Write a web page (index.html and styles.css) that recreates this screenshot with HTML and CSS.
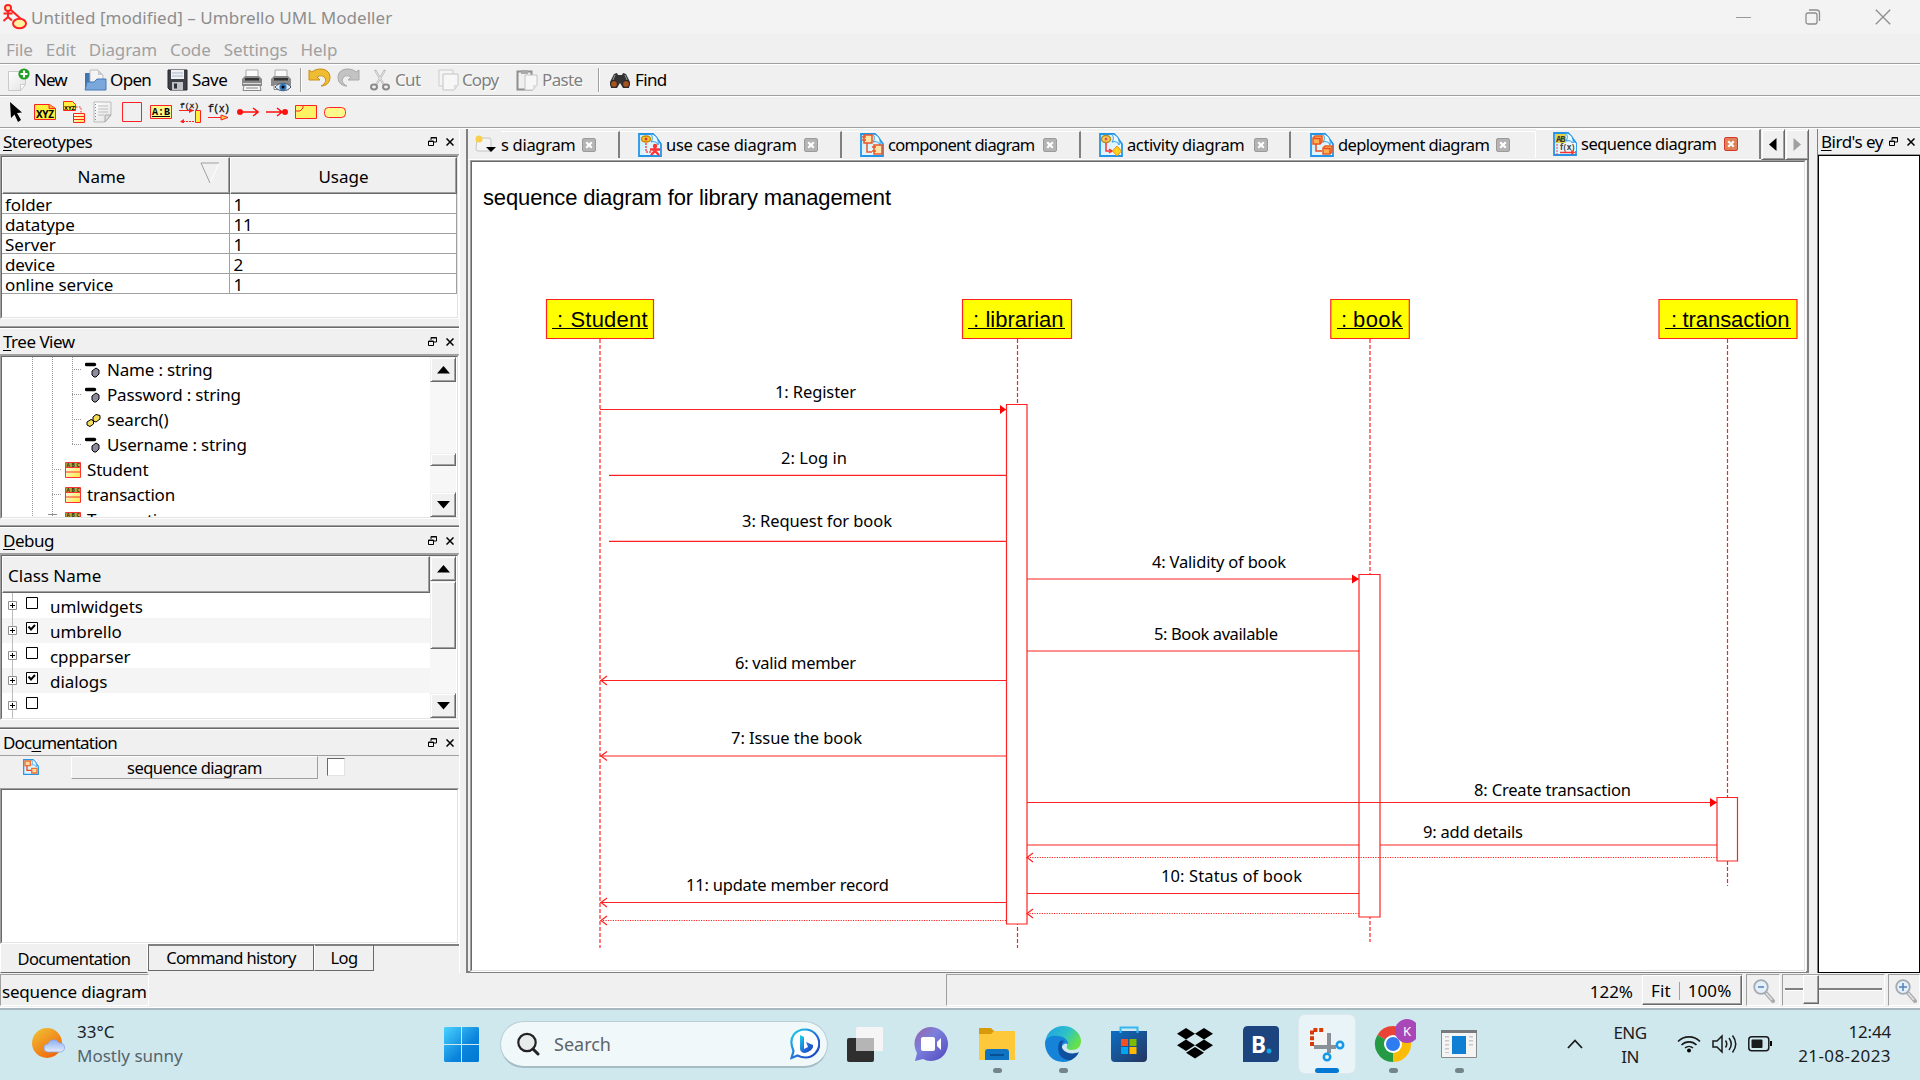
FILE: index.html
```html
<!DOCTYPE html>
<html lang="en">
<head>
<meta charset="utf-8">
<title>Untitled [modified] – Umbrello UML Modeller</title>
<link rel="stylesheet" href="styles.css">
</head>
<body>
<svg class="defs" width="0" height="0">
  <defs>
    <linearGradient id="gPaper" x1="0" y1="0" x2="1" y2="1"><stop offset="0" stop-color="#fff"/><stop offset="1" stop-color="#e2e2e2"/></linearGradient>
    <linearGradient id="gClass" x1="0" y1="0" x2="1" y2="1"><stop offset="0" stop-color="#fff"/><stop offset="1" stop-color="#fbe93a"/></linearGradient>
    <linearGradient id="gTab" x1="0" y1="0" x2="1" y2="1"><stop offset="0" stop-color="#c5ecfc"/><stop offset="1" stop-color="#f4fcff"/></linearGradient>
    <symbol id="restore" viewBox="0 0 9 9"><path d="M3 3V.5h5.5V5H6M3 1h5.5M.5 4h5v4.500h-5zM.5 4.500h5" fill="none" stroke="#000"/></symbol>
    <symbol id="close" viewBox="0 0 8 8"><path d="M.5.5l7 7M7.500.5l-7 7" stroke="#000" stroke-width="1.500"/></symbol>
    <symbol id="attr" viewBox="0 0 16 16"><path d="M1.500 2.500h8" stroke="#000" stroke-width="3.400" stroke-linecap="round"/><path d="M7 9l4-3 3 2v4l-3 3h-2l-2-2z" fill="#8d8a9e" stroke="#000"/></symbol>
    <symbol id="oper" viewBox="0 0 16 16"><path d="M2 10l4-2.500 2.500 1V12L5 14.500 2 13zM8 5l3-2.500 4 1V7l-4 3-3-1z" fill="#f4de55" stroke="#000"/></symbol>
    <symbol id="cls" viewBox="0 0 16 16"><path d="M.5.5h15v15H.5z" fill="url(#gClass)" stroke="#f33"/><path d="M1 1h14v4H1z" fill="#b4a83c"/><path d="M0 5.500h16M0 10h16" stroke="#f33"/><text x="1.500" y="5" font-size="5" font-weight="bold" textLength="13" fill="#332">ABC</text></symbol>
    <symbol id="plus" viewBox="0 0 9 9"><path d="M.5.5h8v8h-8z" fill="#fff" stroke="#909090"/><path d="M2 4.500h5M4.500 2v5" stroke="#000"/></symbol>
    <symbol id="box" viewBox="0 0 12 12"><path d="M.5.5h11v11H.5z" fill="#fff" stroke="#000"/></symbol>
    <symbol id="checked" viewBox="0 0 12 12"><path d="M.5.5h11v11H.5z" fill="#fff" stroke="#000"/><path d="M2.500 4.500l2.500 3 4-4.500" fill="none" stroke="#000" stroke-width="2"/></symbol>
    <symbol id="up" viewBox="0 0 13 8"><path d="M6.500 0L13 7.500H0z"/></symbol>
    <symbol id="down" viewBox="0 0 13 8"><path d="M6.500 7.500L0 0h13z"/></symbol>
    <symbol id="page" viewBox="0 0 24 24"><path d="M1 1h14l3 3 5 7v12H1z" fill="url(#gTab)" stroke="#2495e6" stroke-width="1.800"/><path d="M12 1c6 0 9 5 8 11-1-3-4-4-7-3 2-3 2-6-1-8z" fill="#e8f9ff" stroke="#2b99e8"/></symbol>
    <symbol id="tabclose" viewBox="0 0 14 14"><rect x=".5" y=".5" width="13" height="13" rx="1.500" fill="#b4b4b4" stroke="#9b9b9b"/><path d="M4.200 4.200l5.600 5.600M9.800 4.200L4.200 9.800" stroke="#fff" stroke-width="2.200"/></symbol>
    <symbol id="tabclose-red" viewBox="0 0 14 14"><rect x=".5" y=".5" width="13" height="13" rx="1.500" fill="#e08058" stroke="#d63a2a"/><path d="M4.200 4.200l5.600 5.600M9.800 4.200L4.200 9.800" stroke="#fff" stroke-width="2.200"/></symbol>
    <symbol id="lens" viewBox="0 0 22 24"><path d="M13 14l7 8" stroke="#aaa" stroke-width="4" stroke-linecap="round"/><path d="M13 14l6 7" stroke="#e4e4e4" stroke-width="1.500"/><circle cx="8" cy="8" r="6.800" fill="#e3effa" stroke="#a4aab2" stroke-width="1.800"/></symbol>
  </defs>
</svg>

<header class="titlebar">
  <svg class="app-icon" viewBox="0 0 26 26"><g fill="none" stroke="#f22" stroke-width="2"><circle cx="6" cy="4" r="3" fill="#ffefb0"/><path d="M6 7v7M1.500 9.500h9M6 13l-4.500 4M6 13l4 3.500M9 6l10 9"/><ellipse cx="17.500" cy="19.500" rx="6.500" ry="4.800" fill="#fff2a0"/></g></svg>
  <span class="title-text">Untitled [modified] – Umbrello UML Modeller</span>
  <div class="win-buttons">
    <svg width="15" height="16" viewBox="0 0 15 16"><path d="M0 8.500h15" stroke="#999"/></svg>
    <svg width="16" height="16" viewBox="0 0 16 16"><g fill="none" stroke="#8d8d8d" stroke-width="1.300"><rect x="1" y="4" width="11" height="11" rx="2"/><path d="M4 1h7.500a3 3 0 0 1 3 3v8"/></g></svg>
    <svg width="16" height="16" viewBox="0 0 16 16"><path d="M.8.8l14.400 14.400M15.200.8L.8 15.200" stroke="#8d8d8d" stroke-width="1.300"/></svg>
  </div>
</header>
<nav class="menubar"><span>File</span><span>Edit</span><span>Diagram</span><span>Code</span><span>Settings</span><span>Help</span></nav>

<div class="toolbar main-tools">
  <div class="tool t-new"><svg width="24" height="24" viewBox="0 0 24 24"><path d="M1.500 3.500h17v13l-5 6h-12z" fill="url(#gPaper)" stroke="#c9c9c9"/><path d="M18.500 16.500h-5v6z" fill="#fff" stroke="#ccc"/><circle cx="17" cy="6" r="5.600" fill="#1f9d24"/><path d="M17 2.500v7M13.500 6h7" stroke="#fff" stroke-width="2.200"/></svg><span>New</span></div>
  <div class="tool t-open"><svg width="23" height="24" viewBox="0 0 23 24"><path d="M1 5h8l2 3v12H1z" fill="#3f74b5"/><path d="M6 2h8l5 5v9H6z" fill="#f4f4f4" stroke="#bbb"/><path d="M14 2v5h5" fill="#ccc"/><path d="M1 22L3 14h7l3-3h9v11z" fill="#7aa7dc" stroke="#4878b4"/></svg><span>Open</span></div>
  <div class="tool t-save"><svg width="21" height="22" viewBox="0 0 21 22"><path d="M1 1h19v20H3l-2-2z" fill="#3f4046" stroke="#26272b"/><path d="M4 1h13v9H4z" fill="#eef1f5"/><path d="M5 4h11M5 7h11" stroke="#a9b6c6"/><path d="M5 13h11v8H5z" fill="#bfc3c8"/><path d="M7 14.500h3v5H7z" fill="#33343a"/></svg><span>Save</span></div>
  <div class="tool t-print"><svg width="22" height="23" viewBox="0 0 22 23"><path d="M5 1h12v8H5z" fill="#fafafa" stroke="#aaa"/><path d="M1 10l3-3h14l3 3v7H1z" fill="#8a8a8a"/><path d="M4 9h14v2.500H4z" fill="#333"/><path d="M2 14.500h18" stroke="#ddd"/><path d="M3 16.500h16l1 5H2z" fill="#f6f6f6" stroke="#888"/><path d="M5 19h12" stroke="#888"/></svg></div>
  <div class="tool t-preview"><svg width="22" height="23" viewBox="0 0 22 23"><path d="M5 1h12v8H5z" fill="#fafafa" stroke="#aaa"/><path d="M1 10l3-3h14l3 3v7H1z" fill="#8a8a8a"/><path d="M4 9h14v2.500H4z" fill="#333"/><path d="M4 15.500h14v5H4z" fill="#f6f6f6" stroke="#888"/><path d="M5 18c4-5 12-5 16 0-4 5-12 5-16 0z" fill="#dceaf8" stroke="#456"/><circle cx="13" cy="18" r="3.600" fill="#3377bb"/><circle cx="13" cy="18" r="1.500"/></svg></div>
  <i class="tool-sep"></i>
  <div class="tool t-undo"><svg width="23" height="20" viewBox="0 0 23 20"><path d="M1 2l3 2C9-1 22 0 22 9c0 6-4 9-9 9 5-2 6-7 3-9-2-2-5-1-7 0l3 3H1z" fill="#efbd32" stroke="#c88d17"/></svg></div>
  <div class="tool t-redo"><svg width="23" height="20" viewBox="0 0 23 20"><path d="M22 2l-3 2C14-1 1 0 1 9c0 6 4 9 9 9-5-2-6-7-3-9 2-2 5-1 7 0l-3 3h11z" fill="#c3c3c3" stroke="#a8a8a8"/></svg></div>
  <div class="tool t-cut off"><svg width="20" height="22" viewBox="0 0 20 22"><path d="M5 1l9 15M15 1L6 16" stroke="#b7b7b7" stroke-width="2.200"/><path d="M5.500 2l8 13M14.500 2l-8 13" stroke="#eee" stroke-width=".8"/><g fill="none" stroke="#8b8b8b" stroke-width="2"><ellipse cx="4" cy="18" rx="3" ry="2.400"/><ellipse cx="16" cy="18" rx="3" ry="2.400"/></g></svg><span>Cut</span></div>
  <div class="tool t-copy off"><svg width="21" height="22" viewBox="0 0 21 22"><path d="M1 1h14v16H1z" fill="#f4f4f4" stroke="#ccc"/><path d="M5 5h15v11l-4 5H5z" fill="#f7f7f7" stroke="#c4c4c4"/><path d="M20 16h-4v5z" fill="#ddd"/></svg><span>Copy</span></div>
  <div class="tool t-paste off"><svg width="22" height="22" viewBox="0 0 22 22"><path d="M1.500 2.500h14v18h-14z" fill="#f0f0f0" stroke="#8e8e8e" stroke-width="2"/><path d="M5 1h7v4H5z" fill="#aaa"/><path d="M9 6h12v10l-4 5H9z" fill="#f7f7f7" stroke="#c4c4c4"/><path d="M21 16h-4v5z" fill="#ddd"/></svg><span>Paste</span></div>
  <i class="tool-sep sep2"></i>
  <div class="tool t-find"><svg width="22" height="17" viewBox="0 0 22 17"><path d="M1 10L5 2l3-1 1 2h4l1-2 3 1 4 8-1 6h-6l-3-5-3 5H2z" fill="#333"/><circle cx="5" cy="12" r="3.500" fill="#a5531f" stroke="#222"/><circle cx="17" cy="12" r="3.500" fill="#a5531f" stroke="#222"/><path d="M6 3l-2 5M16 3l2 5" stroke="#999"/></svg><span>Find</span></div>
</div>

<div class="toolbar diagram-tools">
  <svg viewBox="0 0 22 22"><path d="M5 1l12 10.500-5 .5 4 7-3 2-3.500-7.500L6 17z"/></svg>
  <svg viewBox="0 0 22 22"><path d="M.5 3.500h15l6 4v11H.5z" fill="#fdf03c" stroke="#f22"/><path d="M15 3.500v4h6" fill="#f9b233" stroke="#f22"/><text x="2" y="17" font-size="10" font-weight="bold" textLength="18">XYZ</text></svg>
  <svg viewBox="0 0 22 22"><path d="M.5.5h9l3 3v6H.5z" fill="#fdf03c" stroke="#f22"/><text x="1" y="8.500" font-size="6" font-weight="bold" textLength="11">XYZ</text><path d="M13 6h5v6" fill="none" stroke="#f22" stroke-dasharray="1.500 1.500"/><path d="M10.500 12.500h11v9h-11z" fill="url(#gClass)" stroke="#f22"/><path d="M10 15.500h12M10 18.500h12" stroke="#f22"/></svg>
  <svg viewBox="0 0 22 22"><path d="M2 1h17v13l-6 7H2z" fill="url(#gPaper)" stroke="#bbb"/><path d="M6 5h10M6 8h10M6 11h10M6 14h6" stroke="#bbb"/><path d="M3.500 3v17" stroke="#889" stroke-dasharray="1 2"/><path d="M19 14h-6v7z" fill="#ddd" stroke="#aaa"/></svg>
  <svg viewBox="0 0 22 22"><path d="M1.500 1.500h19v19h-19z" fill="none" stroke="#f22"/></svg>
  <svg viewBox="0 0 22 22"><path d="M.5 4.500h21v13H.5z" fill="#fdf88c" stroke="#f22"/><text x="2" y="14" class="mono" font-size="10" font-weight="bold" textLength="18">A:B</text><path d="M2 15.500h18" stroke="#000"/></svg>
  <svg viewBox="0 0 22 22"><text x="1" y="7" class="mono" font-size="8" textLength="19" stroke="#222" stroke-width=".3">f(x)</text><path d="M0 9.500h15" stroke="#f22"/><path d="M4 20.500h12" stroke="#f22" stroke-dasharray="2 1"/><path d="M10 7l5 2.500-5 2.500zM5 18l-4 2.500 4 2.500z" fill="#f22"/><path d="M16.500 9.500h5v12h-5z" fill="#fdf03c" stroke="#f22"/></svg>
  <svg viewBox="0 0 22 22"><text x="0" y="11" class="mono" font-size="10" textLength="22" stroke="#222" stroke-width=".3">f(x)</text><path d="M0 16.500h14" stroke="#f22"/><path d="M13 14l7 2.500-7 2.500z" fill="#fc4" stroke="#f22"/></svg>
  <svg viewBox="0 0 22 22"><circle cx="3" cy="11" r="3" fill="#f11"/><path d="M3 11h18M16 7l5 4-5 4" fill="none" stroke="#f11" stroke-width="1.500"/></svg>
  <svg viewBox="0 0 22 22"><circle cx="19" cy="11" r="3" fill="#f11"/><path d="M0 11h18M11 7l5 4-5 4" fill="none" stroke="#f11" stroke-width="1.500"/></svg>
  <svg viewBox="0 0 22 22"><path d="M.5 4.500h21v13H.5z" fill="#fdf264" stroke="#f22"/><path d="M1 10h4l3-3V5" fill="none" stroke="#f22"/></svg>
  <svg viewBox="0 0 22 22"><rect x=".5" y="6.500" width="21" height="10" rx="4" fill="#fdf88c" stroke="#f22"/></svg>
</div>

<main class="workspace">
  <aside class="dock">
    <section class="panel stereo">
      <h2><span><u>S</u>tereotypes</span><svg class="d-rest"><use href="#restore"/></svg><svg class="d-close"><use href="#close"/></svg></h2>
      <div class="frame"><div class="inner">
        <div class="grid-head"><div>Name<svg class="sort" width="20" height="22" viewBox="0 0 20 22"><path d="M19 1L10 21" stroke="#fff"/><path d="M19 1H1l9 20" fill="none" stroke="#a0a0a0"/></svg></div><div>Usage</div></div>
        <div class="grid-row"><span>folder</span><span>1</span></div>
        <div class="grid-row"><span>datatype</span><span>11</span></div>
        <div class="grid-row"><span>Server</span><span>1</span></div>
        <div class="grid-row"><span>device</span><span>2</span></div>
        <div class="grid-row"><span>online service</span><span>1</span></div>
      </div></div>
    </section>
    <section class="panel tree">
      <h2><span><u>T</u>ree View</span><svg class="d-rest"><use href="#restore"/></svg><svg class="d-close"><use href="#close"/></svg></h2>
      <div class="frame"><div class="inner split">
        <div class="tree-list">
          <svg class="branches" width="80" height="159" viewBox="0 0 80 159"><path d="M30.500 0v159M50.500 0v159M70.500 0v88M70 12.500h10M70 37.500h10M70 62.500h10M70 87.500h10M50 112.500h10M50 137.500h10" fill="none" stroke="#999" stroke-dasharray="1 1"/><path d="M46 157.500h9" stroke="#909090"/></svg>
          <div class="leaf"><svg><use href="#attr"/></svg>Name : string</div>
          <div class="leaf"><svg><use href="#attr"/></svg>Password : string</div>
          <div class="leaf"><svg><use href="#oper"/></svg>search()</div>
          <div class="leaf"><svg><use href="#attr"/></svg>Username : string</div>
          <div class="leaf node"><svg><use href="#cls"/></svg>Student</div>
          <div class="leaf node"><svg><use href="#cls"/></svg>transaction</div>
          <div class="leaf node"><svg><use href="#cls"/></svg>Transaction</div>
        </div>
        <div class="scroll"><b class="sb"><svg><use href="#up"/></svg></b><i class="grow1"></i><b class="thumb small"></b><i class="grow2"></i><b class="sb"><svg><use href="#down"/></svg></b></div>
      </div></div>
    </section>
    <section class="panel debug">
      <h2><span><u>D</u>ebug</span><svg class="d-rest"><use href="#restore"/></svg><svg class="d-close"><use href="#close"/></svg></h2>
      <div class="frame"><div class="inner split">
        <div class="debug-list">
          <div class="list-head">Class Name</div>
          <div class="check-row"><svg class="pl"><use href="#plus"/></svg><svg class="ck"><use href="#box"/></svg>umlwidgets</div>
          <div class="check-row alt"><svg class="pl"><use href="#plus"/></svg><svg class="ck"><use href="#checked"/></svg>umbrello</div>
          <div class="check-row"><svg class="pl"><use href="#plus"/></svg><svg class="ck"><use href="#box"/></svg>cppparser</div>
          <div class="check-row alt"><svg class="pl"><use href="#plus"/></svg><svg class="ck"><use href="#checked"/></svg>dialogs</div>
          <div class="check-row"><svg class="pl"><use href="#plus"/></svg><svg class="ck"><use href="#box"/></svg></div>
        </div>
        <div class="scroll"><b class="sb"><svg><use href="#up"/></svg></b><b class="thumb large"></b><i class="grow"></i><b class="sb"><svg><use href="#down"/></svg></b></div>
      </div></div>
    </section>
    <section class="panel docs">
      <h2><span>Doc<u>u</u>mentation</span><svg class="d-rest"><use href="#restore"/></svg><svg class="d-close"><use href="#close"/></svg></h2>
      <div class="doc-row">
        <svg width="16" height="16" viewBox="0 0 24 24"><use href="#page"/><path d="M3 3h8v7H3zM13 14h8v7h-8z" fill="#ffd9a0" stroke="#f07030" stroke-width="2"/><path d="M6 10v7h6" fill="none" stroke="#f04020" stroke-width="2"/></svg>
        <div class="doc-name">sequence diagram</div><div class="doc-check"></div>
      </div>
      <div class="frame"><div class="inner"></div></div>
      <div class="dock-tabs"><span class="on">Documentation</span><span class="cmd">Command history</span><span class="log">Log</span><em></em></div>
    </section>
  </aside>

  <section class="mdi">
    <div class="tabs">
      <div class="newtab"><svg width="21" height="20" viewBox="0 0 21 20"><path d="M2 3h12q2 0 2 2v11H3q-2 0-2-2z" fill="#f4f4f4" stroke="#c4c4c4"/><circle cx="4" cy="4" r="3.500" fill="#f7cf4a"/><path d="M11 12h10l-5 5z"/></svg></div>
      <div class="tab first"><span>s diagram</span><svg class="x"><use href="#tabclose"/></svg></div>
      <div class="tab usecase"><svg class="ic" viewBox="0 0 24 24"><use href="#page"/><ellipse cx="8" cy="6" rx="4.500" ry="3" fill="#fc3" stroke="#c80" stroke-width="1.500"/><circle cx="8" cy="6" r="1.500" fill="#d33"/><path d="M8 10v9h5" fill="none" stroke="#f44" stroke-dasharray="2 1" stroke-width="1.500"/><circle cx="17" cy="13" r="2.200" fill="#f33"/><path d="M12 16.500h10M17 14v4l-4 4M17 18l4 4" fill="none" stroke="#f33" stroke-width="2.400"/></svg><span>use case diagram</span><svg class="x"><use href="#tabclose"/></svg></div>
      <div class="tab component"><svg class="ic" viewBox="0 0 24 24"><use href="#page"/><path d="M4 2h8v8H4zM14 12h8v9h-8zM2 4h4M2 7h4M12 14h4M12 18h4" fill="#ffe3a8" stroke="#e8552a" stroke-width="1.500"/><path d="M7 10v9h5" fill="none" stroke="#e8552a" stroke-width="1.500"/></svg><span>component diagram</span><svg class="x"><use href="#tabclose"/></svg></div>
      <div class="tab activity"><svg class="ic" viewBox="0 0 24 24"><use href="#page"/><ellipse cx="7" cy="6" rx="4.500" ry="3.500" fill="#ffd25a" stroke="#b88a20" stroke-width="1.500"/><circle cx="7" cy="6" r="1.500" fill="#d55"/><path d="M7 10v8h5M10 16l3 2-3 2" fill="none" stroke="#f33" stroke-width="1.500"/><path d="M18 13l4.500 5-4.500 5-4.500-5z" fill="#ffd21c" stroke="#ee8a10"/></svg><span>activity diagram</span><svg class="x"><use href="#tabclose"/></svg></div>
      <div class="tab deployment"><svg class="ic" viewBox="0 0 24 24"><use href="#page"/><path d="M3 5l2-2h7v6l-2 2H3zM13 15l2-2h7v6l-2 2h-7z" fill="#ffb050" stroke="#ea5a20" stroke-width="1.500"/><path d="M4 5.500h6v5M14 15.500h6v5M6 11v7h6" fill="none" stroke="#ea4a20" stroke-width="1.500"/></svg><span>deployment diagram</span><svg class="x"><use href="#tabclose"/></svg></div>
      <div class="tab sequence"><svg class="ic" viewBox="0 0 24 24"><use href="#page"/><path d="M2 2h11v9H2z" fill="#e2cf48"/><text x="3" y="9.500" font-size="8" font-weight="bold" textLength="9" fill="#333">AB</text><path d="M4 12v11" stroke="#f44" stroke-dasharray="2 1"/><path d="M6 11h17v8H6z" fill="#eef6fa"/><text x="7" y="17.500" font-size="8" font-weight="bold" textLength="14" fill="#444">f(x)</text><path d="M7 20.500h13M18 18.500l3 2-3 2" fill="none" stroke="#f33" stroke-width="1.500"/></svg><span>sequence diagram</span><svg class="x"><use href="#tabclose-red"/></svg></div>
      <div class="tab-nav"><b><svg width="8" height="13" viewBox="0 0 8 13"><path d="M7.500 0v13L0 6.500z"/></svg></b><b><svg width="8" height="13" viewBox="0 0 8 13"><path d="M.5 0v13L8 6.500z" fill="#a0a0a0"/></svg></b></div>
    </div>
    <div class="canvas-frame"><div class="canvas-inner">
      <svg class="diagram" viewBox="472 162 1333 808">
        <text class="obj" x="483" y="204.500" textLength="408">sequence diagram for library management</text>
        <g class="life"><path d="M600 339V948M1017.500 339V948M1370 339V942M1727.500 339V886"/></g>
        <g class="head"><path d="M546.500 299.500h107v39h-107zM962.500 299.500h109v39h-109zM1330.800 299.500h78.500v39h-78.500zM1659 299.500h138v39h-138z"/></g>
        <g class="obj">
          <text x="557" y="327">:</text><text x="570.500" y="327" textLength="77">Student</text>
          <text x="973" y="327">:</text><text x="985.500" y="327" textLength="78">librarian</text>
          <text x="1341" y="327">:</text><text x="1353" y="327" textLength="49">book</text>
          <text x="1671" y="327">:</text><text x="1682.500" y="327" textLength="107">transaction</text>
        </g>
        <path d="M552 328.500h96M968 328.500h97M1337 328.500h66M1665 328.500h126" stroke="#000"/>
        <g class="msg"><path d="M1027 845h690"/></g>
        <g class="bar"><path d="M1006.500 404.500h20.500v519.500h-20.500zM1359 574.500h21v342.500h-21zM1717 797.500h20.500v63.500h-20.500z"/></g>
        <g class="msg"><path d="M600 409.500h406M609 475.300h397M609 541.300h397M1027 579h332M1027 651h332M600 680.500h406M600 756h406M1027 802.500h690M1027 893.500h332M600 902.500h406"/></g>
        <g class="ret"><path d="M1717 857.500H1027M1359 913.500H1027M1006 920.500H600"/></g>
        <g class="solid-tip"><path d="M1000 405l6 4.500-6 4.500zM1352 574.500l7 4.500-7 4.500zM1710 798l7 4.500-7 4.500z"/></g>
        <g class="open-tip"><path d="M607 676l-6 4.500 6 4.500M607 751.500l-6 4.500 6 4.500M607 898l-6 4.500 6 4.500M607 916l-6 4.500 6 4.500M1033 853l-6 4.500 6 4.500M1033 909l-6 4.500 6 4.500"/></g>
        <g class="lbl">
          <text x="775" y="398" textLength="81">1: Register</text>
          <text x="781" y="464" textLength="66">2: Log in</text>
          <text x="742" y="527" textLength="150">3: Request for book</text>
          <text x="1152" y="568" textLength="134">4: Validity of book</text>
          <text x="1154" y="640" textLength="124">5: Book available</text>
          <text x="735" y="669" textLength="121">6: valid member</text>
          <text x="731" y="744" textLength="131">7: Issue the book</text>
          <text x="1474" y="796" textLength="157">8: Create transaction</text>
          <text x="1423" y="838" textLength="100">9: add details</text>
          <text x="1161" y="882" textLength="141">10: Status of book</text>
          <text x="686" y="891" textLength="203">11: update member record</text>
        </g>
      </svg>
    </div></div>
  </section>

  <aside class="bird">
    <h2><span><u>B</u>ird's eye</span><svg class="d-rest"><use href="#restore"/></svg><svg class="d-close"><use href="#close"/></svg></h2>
    <div class="bird-view"></div>
  </aside>
</main>

<footer class="statusbar">
  <div class="st-name">sequence diagram</div>
  <div class="st-main"><span class="pct">122%</span><div class="fit"><span>Fit</span><i></i><span>100%</span></div></div>
  <div class="st-zoom"><svg width="22" height="24" viewBox="0 0 22 24"><use href="#lens"/><path d="M5 8h6" stroke="#5580b8" stroke-width="1.500"/></svg></div>
  <div class="st-slider"><i class="rail short"></i><b></b><i class="rail"></i></div>
  <div class="st-zoom in"><svg width="22" height="24" viewBox="0 0 22 24"><use href="#lens"/><path d="M4 8h8M8 4v8" stroke="#5580b8" stroke-width="1.500"/></svg></div>
</footer>

<footer class="taskbar">
  <div class="weather">
    <svg width="34" height="34" viewBox="0 0 34 34"><defs><linearGradient id="sun" x1="0" y1="0" x2=".7" y2="1"><stop offset="0" stop-color="#f0c536"/><stop offset="1" stop-color="#f2660d"/></linearGradient><linearGradient id="cl" x1="0" y1="0" x2="0" y2="1"><stop offset="0" stop-color="#8fb0f0"/><stop offset="1" stop-color="#e3ecfc"/></linearGradient></defs><circle cx="15" cy="16" r="15" fill="url(#sun)"/><path d="M16 25a4 4 0 0 1 0-8 6 6 0 0 1 11-1 4.600 4.600 0 0 1 2 9z" fill="url(#cl)" stroke="#86a6e6" stroke-width=".8"/></svg>
    <div><p>33°C</p><p class="dim">Mostly sunny</p></div>
  </div>
  <svg class="start" width="35" height="35" viewBox="0 0 35 35"><defs><linearGradient id="win" x1="0" y1="0" x2="35" y2="35" gradientUnits="userSpaceOnUse"><stop offset="0" stop-color="#4ad2ff"/><stop offset=".6" stop-color="#0a84dc"/><stop offset="1" stop-color="#0078d4"/></linearGradient></defs><path d="M1 0h16v17H0V1zM18 0h16l1 1v16H18zM0 18h17v17H1l-1-1zM18 18h17v16l-1 1H18z" fill="url(#win)"/></svg>
  <div class="search">
    <svg width="24" height="24" viewBox="0 0 24 24"><circle cx="11" cy="10.500" r="8.700" fill="#e8ebec" stroke="#222" stroke-width="2.200"/><path d="M17 17l5 5" stroke="#222" stroke-width="3" stroke-linecap="round"/></svg>
    <span>Search</span>
    <svg class="bing" width="30" height="32" viewBox="0 0 30 32"><defs><linearGradient id="bg1" x1="0" y1="0" x2="1" y2="1"><stop offset="0" stop-color="#19d4e8"/><stop offset=".6" stop-color="#2466d8"/><stop offset="1" stop-color="#173fb8"/></linearGradient></defs><path d="M1.500 30l2-7C-3 8 7 1.500 15 1.500A14 14 0 0 1 15.500 29.500c-4 0-6-1-8-2z" fill="#fff" stroke="url(#bg1)" stroke-width="2.200"/><path d="M10 7l4 2v12l4-2-2-5 7 3c1 4-4 7-8 8-3 0-5-2-5-4z" fill="url(#bg1)"/></svg>
  </div>
  <div class="apps">
    <div class="app"><svg width="36" height="36" viewBox="0 0 36 36"><path d="M0 14q0-2 2-2h25v22q0 2-2 2H2q-2 0-2-2z" fill="#2f2f2f"/><path d="M11 1h25v23q0 1-1 1H9V3q0-2 2-2z" fill="#f5f5f5"/><path d="M9 12h18v13H9z" fill="#b5b5b5"/></svg></div>
    <div class="app"><svg width="36" height="36" viewBox="0 0 36 36"><defs><linearGradient id="ch" x1="0" y1="0" x2="1" y2="1"><stop offset="0" stop-color="#9a60a4"/><stop offset=".4" stop-color="#7b80dc"/><stop offset="1" stop-color="#5048c0"/></linearGradient></defs><path d="M18 1a17 17 0 1 1-8 32l-8 2 2-8C-3 14 6 1 18 1z" fill="url(#ch)"/><rect x="8" y="11" width="14" height="14" rx="2" fill="#fff"/><path d="M24 16l4-4v12l-4-4z" fill="#fff"/></svg></div>
    <div class="app"><svg width="36" height="36" viewBox="0 0 36 36"><path d="M0 2h12l4 4-4 4H0z" fill="#d99a0a"/><path d="M0 8h12l3-3h21v29H0z" fill="#fdc93a"/><path d="M6 34V26q0-3 3-3h18q3 0 3 3v8z" fill="#0f73c4"/><path d="M11 29h14" stroke="#094f94" stroke-width="2"/></svg><i></i></div>
    <div class="app"><svg width="36" height="36" viewBox="0 0 36 36"><defs><linearGradient id="ed" x1="0" y1="0" x2="1" y2=".5"><stop offset="0" stop-color="#1f9be8"/><stop offset=".6" stop-color="#2cc2c8"/><stop offset="1" stop-color="#66e04a"/></linearGradient></defs><path d="M0 16C2 5 10 0 18 0c11 0 18 8 18 15 0 6-4 9-9 9-4 0-6-2-5-4 1-3-1-8-8-8C6 12 1 14 0 18z" fill="url(#ed)"/><path d="M0 17c1-5 6-8 12-7 7 0 11 4 11 8-4-2-8 2-6 8 2 5 6 8 11 7-3 2-6 3-10 3C7 36 0 27 0 17z" fill="#1583d8"/><path d="M14 17c-3 9 2 18 12 17 4-2 6-4 8-8-9 4-19-1-17-8 0-1 1-2 2-3-3-1-4 0-5 2z" fill="#0e4fa0"/></svg><i></i></div>
    <div class="app"><svg width="36" height="36" viewBox="0 0 36 36"><defs><linearGradient id="st" x1="0" y1="0" x2="1" y2="1"><stop offset="0" stop-color="#0b6fc6"/><stop offset="1" stop-color="#26345e"/></linearGradient></defs><path d="M0 5h36v27q0 4-4 4H4q-4 0-4-4z" fill="url(#st)"/><path d="M9.500 7V1.500h17V7" fill="none" stroke="#35b8f2" stroke-width="2"/><path d="M10 13h7v7h-7z" fill="#f25022"/><path d="M18.500 13h7v7h-7z" fill="#7fba00"/><path d="M10 21h7v7h-7z" fill="#00a4ef"/><path d="M18.500 21h7v7h-7z" fill="#ffb900"/></svg></div>
    <div class="app"><svg width="36" height="36" viewBox="0 0 36 36"><path d="M9 2l9 5.700-9 5.700-9-5.700zM27 2l9 5.700-9 5.700-9-5.700zM9 13.500l9 5.700-9 5.700-9-5.700zM27 13.500l9 5.700-9 5.700-9-5.700zM18 21l9 5.700-9 5.700-9-5.700z"/></svg></div>
    <div class="app"><svg width="36" height="36" viewBox="0 0 36 36"><path d="M5 0h27q4 0 4 4v28q0 4-4 4H0V5q0-5 5-5z" fill="#1c447e"/><text x="8" y="27" font-size="24" font-weight="bold" fill="#fff" textLength="15" lengthAdjust="spacingAndGlyphs">B</text><circle cx="26" cy="25" r="2.500" fill="#12a4e8"/></svg></div>
    <div class="app active"><svg width="36" height="36" viewBox="0 0 36 36"><path d="M0 2h18v20H0z" fill="#f4f4f4"/><path d="M3 20V4h13" fill="none" stroke="#d93a05" stroke-width="4" stroke-dasharray="4 1.800"/><path d="M20 7v20M5 21h22" fill="none" stroke="#8a9098" stroke-width="4"/><circle cx="31" cy="19" r="3.200" fill="none" stroke="#1499e8" stroke-width="2.500"/><circle cx="18" cy="31" r="3.200" fill="none" stroke="#1499e8" stroke-width="2.500"/></svg><i class="sel"></i></div>
    <div class="app"><svg class="chrome" width="46" height="46" viewBox="-5 -8 46 46"><path d="M18 17L2.400 8A18 18 0 0 1 33.600 8z" fill="#ea4335"/><path d="M18 17L33.600 8A18 18 0 0 1 18 35z" fill="#fbbc05"/><path d="M18 17v18A18 18 0 0 1 2.400 8z" fill="#259a44"/><circle cx="18" cy="17" r="9" fill="#fff"/><circle cx="18" cy="17" r="7" fill="#2f7cf0"/><circle cx="32" cy="4" r="12" fill="#a946b8"/><text x="28" y="9" font-size="13" fill="#fff">K</text></svg><i></i></div>
    <div class="app"><svg width="36" height="36" viewBox="0 0 36 36"><path d="M.5 4.500h35v27H.5z" fill="#f4f4f4" stroke="#8a8a8a"/><path d="M0 4h36v3H0z" fill="#777b80"/><path d="M11 10h14v18H11z" fill="#0f7fd4"/><path d="M6 10v17M30 10v12" stroke="#c8c8c8" stroke-width="4" stroke-dasharray="1.500 2.500"/></svg><i></i></div>
  </div>
  <div class="tray">
    <svg width="16" height="10" viewBox="0 0 16 10"><path d="M1 9l7-7.500L15 9" fill="none" stroke="#1a1a1a" stroke-width="1.800"/></svg>
    <div class="lang"><p>ENG</p><p>IN</p></div>
    <svg class="wifi" width="24" height="18" viewBox="0 0 24 18"><g fill="none" stroke="#1a1a1a" stroke-width="1.600"><path d="M1 6.500a15.500 15.500 0 0 1 22 0M4.500 10a10.500 10.500 0 0 1 15 0M8 13a6 6 0 0 1 8 0"/></g><circle cx="12" cy="15.500" r="2"/></svg>
    <svg class="spk" width="25" height="20" viewBox="0 0 25 20"><g fill="none" stroke="#1a1a1a" stroke-width="1.500"><path d="M1 7h4l5-5v16l-5-5H1z"/><path d="M13.500 6.500q2.500 3.500 0 7M17 4q4.500 6 0 12M20.500 1.500q6.500 8.500 0 17"/></g></svg>
    <svg class="bat" width="25" height="16" viewBox="0 0 25 16"><rect x=".8" y=".8" width="20" height="14" rx="3" fill="none" stroke="#1a1a1a" stroke-width="1.500"/><rect x="3.500" y="3.500" width="11" height="8.600" rx="1" fill="#1a1a1a"/><path d="M22 5h2v5h-2z"/></svg>
    <div class="clock"><p>12:44</p><p class="date">21-08-2023</p></div>
  </div>
</footer>
</body>
</html>
```
FILE: styles.css
```css
* { box-sizing: border-box; }
body {
  margin: 0;
  width: 1920px;
  height: 1080px;
  overflow: hidden;
  display: flex;
  flex-direction: column;
  background: #f0f0f0;
  color: #000;
  font: 17px/24px "Noto Sans", "Open Sans", sans-serif;
}
svg { display: block; flex: none; }
p, h2 { margin: 0; font-weight: normal; }
.defs { position: absolute; }
u { text-underline-offset: 2px; text-decoration-thickness: 1px; }
.mono { font-family: "Liberation Mono", monospace; }

.titlebar { height: 34px; flex: none; display: flex; align-items: center; background: #f3f3f3; color: #8d8d8d; padding-left: 2px; }
.app-icon { width: 26px; height: 26px; margin-right: 3px; }
.title-text { letter-spacing: .05px; line-height: 26px; padding-top: 2px; }
.win-buttons { margin-left: auto; display: flex; gap: 54px; padding-right: 29px; }

.menubar { height: 30px; flex: none; border-bottom: 1px solid #a0a0a0; display: flex; gap: 13px; padding-left: 6px; line-height: 31px; letter-spacing: -.1px; color: #a0a0a0; }

.toolbar { height: 32px; flex: none; border-top: 1px solid #fff; border-bottom: 1px solid #a0a0a0; display: flex; align-items: center; }
.tool { display: flex; align-items: center; gap: 3px; flex: none; letter-spacing: -.65px; }
.off { color: #808080; text-shadow: 1px 1px #fff; }
.tool-sep { width: 2px; height: 24px; background: #a0a0a0; border-right: 1px solid #fff; }
.t-new { width: 77px; margin-left: 7px; letter-spacing: -1px; }
.t-open { width: 83px; }
.t-save { width: 74px; gap: 4px; letter-spacing: -.4px; }
.t-print { width: 29px; }
.t-preview { width: 30px; }
.t-undo { width: 29px; margin-left: 6px; padding-bottom: 4px; }
.t-redo { width: 33px; padding-bottom: 4px; }
.t-cut { width: 68px; gap: 5px; }
.t-copy { width: 78px; letter-spacing: -.9px; }
.t-paste { width: 82px; gap: 4px; }
.t-find { margin-left: 9px; gap: 4px; }
.diagram-tools { gap: 7px; padding-left: 5px; }
.diagram-tools svg { width: 22px; height: 22px; }

.workspace { height: 845px; flex: none; display: flex; border-top: 1px solid #fff; }
.dock { width: 460px; border-right: 1px solid #fff; display: flex; flex-direction: column; flex: none; }
.panel { display: flex; flex-direction: column; flex: none; width: 459px; border-top: 1px solid #696969; }
.panel h2, .bird h2 { display: flex; align-items: center; border-top: 1px solid #fff; border-bottom: 1px solid #a0a0a0; font-size: 17px; padding-left: 3px; height: 27px; flex: none; letter-spacing: -.5px; }
.d-rest { width: 9px; height: 9px; margin-left: auto; margin-right: 9px; }
.d-close { width: 8px; height: 8px; margin-right: 5px; }
.frame { border: 1px solid; border-color: #a0a0a0 #fff #fff #a0a0a0; }
.inner { border: 1px solid; border-color: #696969 #e3e3e3 #e3e3e3 #696969; background: #fff; overflow: hidden; }
.stereo { height: 198px; border-bottom: 1px solid #a0a0a0; border-top: 0; }
.stereo h2 { height: 26px; border-top: 0; }
.stereo .inner { height: 162px; }
.grid-head { display: flex; height: 37px; }
.grid-head div { width: 227px; background: #f0f0f0; border: 1px solid; border-color: #fff #696969 #696969 #fff; box-shadow: inset -1px -1px #a0a0a0; text-align: center; line-height: 37px; position: relative; }
.grid-head div:first-child { width: 228px; padding-right: 29px; }
.sort { position: absolute; right: 9px; top: 4px; }
.grid-row { display: flex; height: 20px; border-bottom: 1px solid #a0a0a0; line-height: 22px; width: 455px; border-right: 1px solid #a0a0a0; letter-spacing: -.1px; }
.grid-row span { width: 227px; padding-left: 4px; }
.grid-row span:first-child { width: 228px; padding-left: 3px; border-right: 1px solid #a0a0a0; }

.tree { height: 199px; border-bottom: 1px solid #a0a0a0; }
.tree .inner { height: 162px; }
.split { display: flex; padding-right: 1px; }
.tree-list { flex: 1; position: relative; }
.branches { position: absolute; left: 0; top: 0; }
.leaf { height: 25px; padding-left: 83px; display: flex; align-items: center; gap: 6px; line-height: 28px; letter-spacing: -.18px; }
.leaf svg { width: 16px; height: 16px; }
.node { padding-left: 63px; }
.scroll { width: 26px; display: flex; flex-direction: column; background: #f7f7f7; }
.scroll b, .tab-nav b { background: #f0f0f0; border: 1px solid; border-color: #f0f0f0 #696969 #696969 #f0f0f0; box-shadow: inset 1px 1px #fff, inset -1px -1px #a0a0a0; display: flex; align-items: center; justify-content: center; }
.sb { height: 25px; }
.sb svg { width: 13px; height: 8px; }
.small { height: 13px; }
.large { height: 68px; }
.grow1 { height: 71px; }
.grow2, .grow { flex: 1; }

.debug { height: 202px; border-bottom: 1px solid #a0a0a0; }
.debug .inner { height: 164px; }
.debug-list { flex: 1; }
.list-head { height: 37px; background: #f0f0f0; border: 1px solid; border-color: #fff #696969 #696969 #fff; box-shadow: inset -1px -1px #a0a0a0; padding-left: 5px; line-height: 37px; }
.check-row { height: 25px; display: flex; padding-left: 6px; line-height: 28px; background: linear-gradient(90deg, #bbb 1px, transparent 1px) 10px 0 / 1px 100% no-repeat; letter-spacing: -.05px; }
.alt { background-color: #f5f5f5; }
.pl { width: 9px; height: 9px; margin: 8px 9px 0 0; }
.ck { width: 12px; height: 12px; margin: 4px 12px 0 0; }

.docs h2 { height: 27px; letter-spacing: -.8px; }
.doc-row { height: 32px; display: flex; align-items: flex-start; padding-left: 23px; }
.doc-row > svg { margin-top: 3px; }
.doc-name { width: 247px; height: 23px; margin-left: 32px; border: 1px solid; border-color: #fff #a0a0a0 #a0a0a0 #fff; text-align: center; font-size: 16.5px; line-height: 22px; letter-spacing: -.55px; }
.doc-check { width: 18px; height: 18px; margin: 2px 0 0 9px; background: #fff; border: 1px solid; border-color: #696969 #e3e3e3 #e3e3e3 #696969; }
.docs .inner { height: 154px; }
.dock-tabs { display: flex; height: 29px; font-size: 16.5px; letter-spacing: -.6px; text-align: center; }
.dock-tabs span { border: 1px solid #696969; border-top: 2px solid #808080; border-left-color: #fff; height: 27px; line-height: 24px; }
.dock-tabs .on { width: 148px; height: 29px; line-height: 27px; border-color: #f0f0f0 #fff #696969 #fff; border-top-width: 1px; }
.dock-tabs .cmd { width: 166px; border-left-color: #696969; }
.dock-tabs .log { width: 60px; }
.dock-tabs em { flex: 1; border-top: 2px solid #808080; }

.mdi { width: 1343px; margin-left: 6px; flex: none; border-left: 2px solid #808080; border-right: 2px solid #808080; border-bottom: 2px solid #808080; display: flex; flex-direction: column; }
.tabs { height: 31px; display: flex; font-size: 16.5px; letter-spacing: -.3px; border-bottom: 1px solid #fff; }
.newtab { width: 33px; flex: none; padding: 6px 0 0 7px; }
.tab { display: flex; flex: none; align-items: center; height: 27px; margin-top: 2px; border-top: 1px solid #fff; border-right: 2px solid #808080; padding: 0 0 1px 19px; }
.tab .ic { width: 24px; height: 24px; margin-right: 4px; }
.tab span { line-height: 26px; white-space: nowrap; }
.x { width: 14px; height: 14px; margin-left: auto; }
.first { width: 119px; padding-left: 0; }
.first .x { margin-right: 22px; }
.usecase { width: 222px; padding-left: 18px; }
.usecase .x { margin-right: 22px; }
.component { width: 239px; padding-left: 18px; letter-spacing: -.7px; }
.component .x { margin-right: 22px; }
.activity { width: 210px; padding-left: 18px; letter-spacing: -.4px; }
.activity .x { margin-right: 21px; }
.deployment { width: 245px; border-right: 1px solid #fff; letter-spacing: -.6px; }
.deployment .x { margin-right: 25px; }
.sequence { width: 225px; height: 30px; margin-top: 0; padding: 0 0 2px 17px; letter-spacing: -.5px; }
.sequence .x { margin-right: 21px; }
.tab-nav { display: flex; flex: 1; }
.tab-nav b { width: 24px; height: 31px; }
.canvas-frame { flex: 1; margin: 0 1px 0 2px; border: 1px solid; border-color: #a0a0a0 #fff #fff #a0a0a0; }
.canvas-inner { height: 100%; border: 1px solid; border-color: #696969 #e3e3e3 #e3e3e3 #696969; background: #fff; overflow: hidden; }
.diagram { width: 1333px; height: 808px; }
.obj { font: 22px "Liberation Sans", Arial, sans-serif; }
.lbl { font: 16.5px "Noto Sans", sans-serif; }
.life path { stroke: #f22; stroke-width: 1.2; stroke-dasharray: 4 2; }
.head path { fill: #ff0; stroke: #f22; stroke-width: 1.2; }
.bar path { fill: #fff; stroke: #f22; stroke-width: 1.2; }
.msg path { stroke: #f22; stroke-width: 1.2; }
.ret path { stroke: #f22; stroke-width: 1.2; stroke-dasharray: 1.2 1.25; }
.solid-tip path { fill: #f00; }
.open-tip path { fill: none; stroke: #f22; stroke-width: 1.2; }

.bird { flex: 1; margin-left: 8px; border-left: 1px solid #808080; display: flex; flex-direction: column; min-width: 0; }
.bird h2 { height: 26px; border-top: 0; padding-left: 3px; }
.bird h2 span { width: 64px; overflow: hidden; white-space: nowrap; }
.bird .d-rest { margin-left: 5px; }
.bird-view { flex: 1; background: #fff; border: 1px solid #000; }

.statusbar { height: 35px; flex: none; display: flex; padding-top: 1px; border-bottom: 1px solid #fff; }
.statusbar > div { height: 32px; border: 1px solid; border-color: #a0a0a0 #fff #fff #a0a0a0; }
.st-name { width: 149px; padding-left: 1px; line-height: 33px; white-space: nowrap; letter-spacing: -.2px; }
.st-main { width: 797px; margin-left: 797px; display: flex; justify-content: flex-end; }
.pct { line-height: 33px; margin-right: 9px; }
.fit { width: 100px; height: 30px; display: flex; align-items: center; gap: 8px; border: 1px solid; border-color: #fff #696969 #696969 #fff; box-shadow: inset -1px -1px #a0a0a0; padding: 2px 0 0 8px; letter-spacing: .1px; }
.fit i { width: 1px; height: 18px; background: #a0a0a0; }
.st-zoom { width: 34px; margin-left: 3px; padding: 4px 0 0 6px; }
.st-slider { width: 103px; margin-left: 2px; display: flex; align-items: center; padding: 0 2px 2px; }
.st-slider b { width: 16px; height: 29px; border: 1px solid; border-color: #fff #696969 #696969 #fff; box-shadow: inset -1px -1px #a0a0a0; }
.rail { height: 3px; flex: 1; border-top: 2px solid #808080; border-bottom: 1px solid #fff; }
.rail.short { flex: none; width: 18px; }
.statusbar .in { flex: 1; margin-left: 3px; }

.taskbar { height: 72px; flex: none; background: #cfe8ee; border-top: 2px solid #a6b8bd; display: flex; color: #1c1c1c; }
.weather { width: 444px; padding: 10px 0 0 32px; display: flex; gap: 11px; }
.weather svg { margin-top: 7px; }
.dim { color: #55646a; }
.start { margin-top: 17px; }
.search { width: 328px; height: 47px; margin: 11px 0 0 21px; border: 1px solid #b7ced5; border-bottom: 2px solid #a4bcc3; border-radius: 24px; background: #f0f8fa; display: flex; align-items: center; padding: 0 7px 0 15px; font-size: 18px; color: #5c6468; }
.search span { margin-left: 14px; }
.bing { margin-left: auto; }
.apps { display: flex; margin-left: 4px; }
.app { width: 66px; height: 70px; display: flex; flex-direction: column; align-items: center; padding-top: 16px; }
.app i { width: 9px; height: 5px; border-radius: 3px; background: #74858a; margin-top: 6px; }
.app .sel { width: 24px; background: #0078d4; }
.active { background: #e9f4f8; width: 56px; height: 58px; margin: 5px 5px 0; border-radius: 6px; padding-top: 11px; box-shadow: 0 0 0 1px #dbe8ec; }
.chrome { margin: -7px 0 -3px; }
.tray { display: flex; align-items: center; margin-left: auto; padding-right: 29px; padding-bottom: 2px; }
.lang { width: 94px; text-align: center; letter-spacing: -.5px; padding-top: 2px; }
.spk { margin-left: 11px; }
.bat { margin-left: 11px; }
.clock { width: 118px; text-align: right; letter-spacing: -.2px; }
.date { letter-spacing: .4px; }
```
